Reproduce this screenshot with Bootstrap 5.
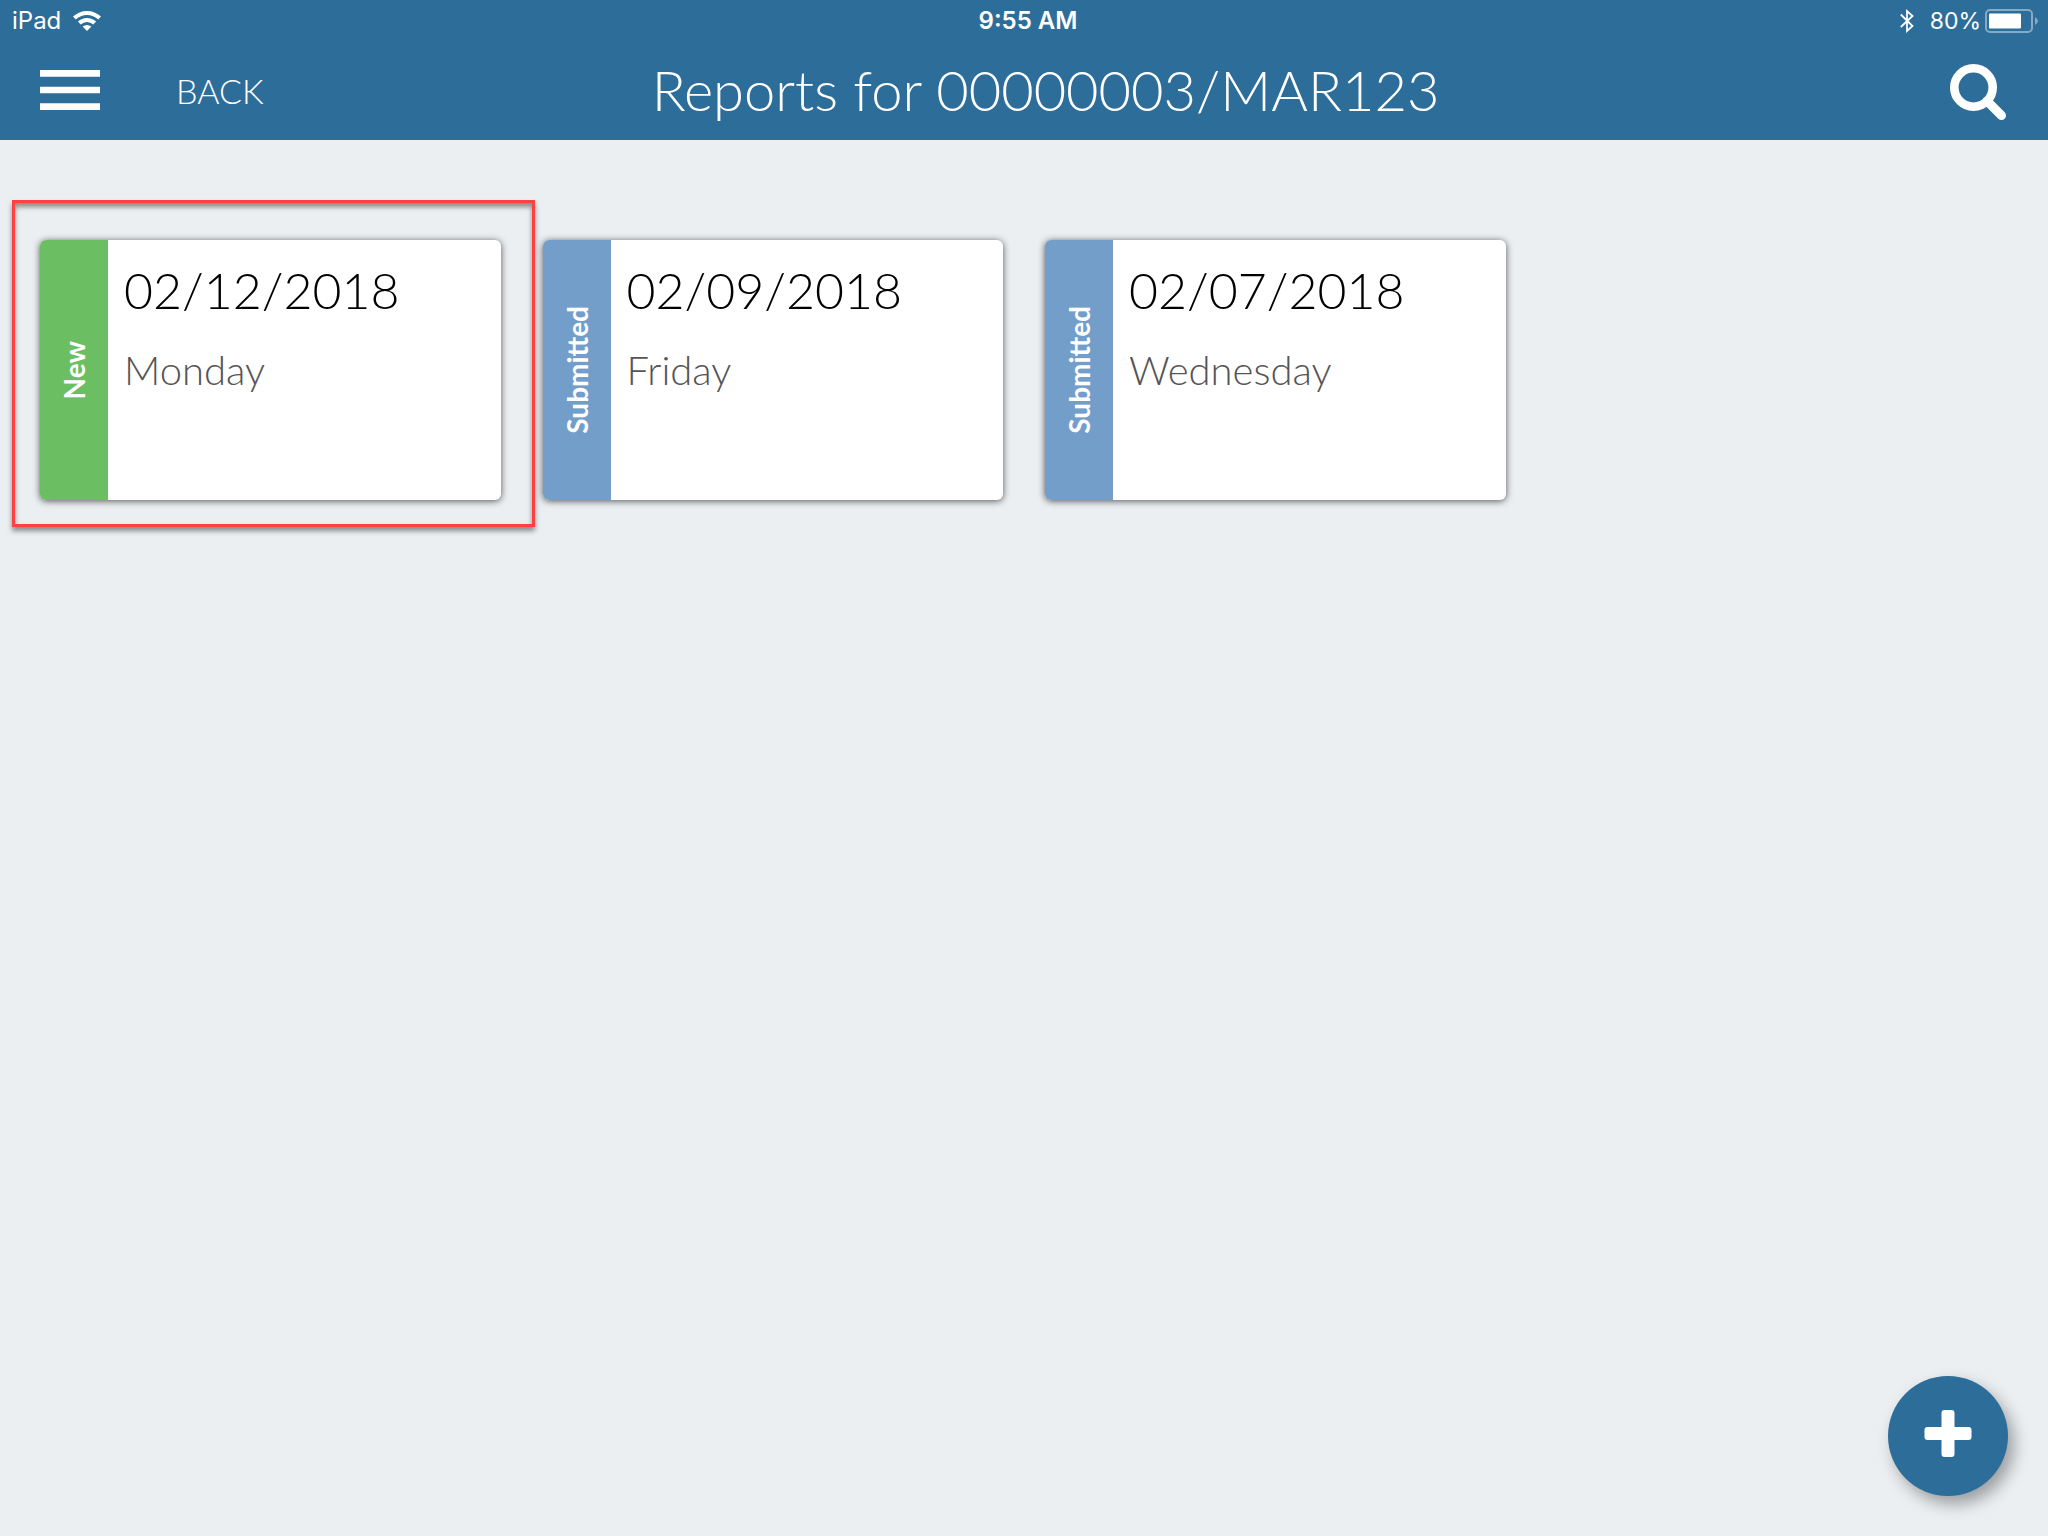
<!DOCTYPE html>
<html lang="en">
<head>
<meta charset="utf-8">
<meta name="viewport" content="width=device-width, initial-scale=1">
<title>Reports for 00000003/MAR123</title>
<link href="https://cdn.jsdelivr.net/npm/bootstrap@5.3.0/dist/css/bootstrap.min.css" rel="stylesheet">
<style>
  body { background: #ebeff2; font-family: Lato, sans-serif; font-weight: 300; }
  .app-header { background: #2d6d99; }
  .status-bar { height: 40px; padding: 2px 10px 0 12px; font-family: Inter, sans-serif; font-size: 24px; font-weight: 400; line-height: 30px; }
  .status-time { font-weight: 600; padding-left: 6px; }
  .status-charge { font-size: 23px; }
  .side { flex: 1 1 0; }
  .status-left { gap: 12px; }
  .toolbar { height: 100px; padding: 0 40px; }
  .toolbar .btn { --bs-btn-color: #fff; --bs-btn-hover-color: #fff; --bs-btn-active-color: #fff; --bs-btn-font-weight: 300; }
  .back-btn { font-size: 34px; line-height: 40px; margin-left: 76px; margin-top: 2px; }
  .page-title { font-size: 56px; font-weight: 300; line-height: 80px; padding-left: 43px; }
  .report-area { padding: 100px 19px 160px; }
  .report-row { --bs-gutter-x: 42px; margin-left: 0; margin-right: 0; }
  .report-card { min-height: 260px; border-radius: 6px; box-shadow: 0 1px 7px rgba(0,0,0,.65); color: #000; }
  .report-state { width: 68px; border-radius: 6px 0 0 6px; font-size: 28px; font-weight: 700; line-height: 34px; }
  .report-state span { writing-mode: vertical-rl; transform: rotate(180deg); }
  .state-new { background: #6bbe61; }
  .state-submitted { background: #749eca; }
  .report-info { padding: 20px 16px; }
  .report-date { font-size: 50px; font-weight: 300; line-height: 60px; }
  .report-day { font-size: 40px; line-height: 48px; margin-top: 26px; color: #555; }
  .callout-box { inset: -40px -13px -27px -7px; border: 3px solid #ff4141; box-shadow: 0 4px 5px rgba(0,0,0,.42), inset 0 4px 5px rgba(0,0,0,.42); pointer-events: none; z-index: 2; }
  .add-btn { right: 40px; bottom: 40px; width: 120px; height: 120px; background: #2d6d99; --bs-btn-hover-bg: #2d6d99; box-shadow: 6px 8px 16px rgba(0,0,0,.34); }
</style>
</head>
<body>
<div class="min-vh-100">
<header class="app-header text-white">
  <div class="status-bar d-flex align-items-center">
    <div class="side status-left d-flex align-items-center">
      <span>iPad</span>
      <svg width="28" height="20" viewBox="0 0 28 20" fill="#fff" aria-hidden="true">
        <path d="M0 5.6Q6 0 14 0T28 5.6L25.2 8.6Q20.400 4 14 4T2.800 8.600Z"/>
        <path d="M4.900 10.600Q9 7 14 7T23.100 10.600L20.300 13.500Q17.500 11 14 11T7.700 13.500Z"/>
        <path d="M9.600 15.500Q14 12.300 18.400 15.500L14 20Z"/>
      </svg>
    </div>
    <div class="status-time">9:55 AM</div>
    <div class="side d-flex align-items-center justify-content-end">
      <svg class="me-3" width="14" height="24" viewBox="0 0 14 24" fill="none" stroke="#fff" stroke-width="1.800" aria-hidden="true"><path d="M0.800 5.500L12.500 17L7 22V2L12.500 7L0.800 18"/></svg>
      <span class="status-charge me-1">80%</span>
      <svg width="53" height="24" viewBox="0 0 53 24" aria-hidden="true">
        <rect x="1" y="1" width="46" height="22" rx="4" fill="none" stroke="#86aac4" stroke-width="2"/>
        <rect x="4" y="4.500" width="32" height="15" rx="1" fill="#fff"/>
        <path d="M50 8Q56 12 50 16Z" fill="#86aac4"/>
      </svg>
    </div>
  </div>
  <nav class="toolbar d-flex align-items-center" aria-label="Main">
    <div class="side d-flex align-items-center">
      <button type="button" class="btn p-0 border-0 d-flex" aria-label="Menu">
        <svg width="60" height="40" viewBox="0 0 60 40" fill="#fff"><path d="M0 0H60V6.700H0ZM0 16.700H60V23.300H0ZM0 33.300H60V40H0Z"/></svg>
      </button>
      <button type="button" class="btn back-btn p-0 border-0">BACK</button>
    </div>
    <h1 class="page-title mb-0">Reports for 00000003/MAR123</h1>
    <div class="side d-flex justify-content-end">
      <button type="button" class="btn p-0 border-0 d-flex" aria-label="Search">
        <svg width="58" height="60" viewBox="0 0 58 60" fill="none" stroke="#fff"><circle cx="23.500" cy="27.500" r="19.200" stroke-width="8.600"/><path d="M37 41L51.500 55.500" stroke-width="9" stroke-linecap="round"/></svg>
      </button>
    </div>
  </nav>
</header>

<main class="report-area">
  <div class="row report-row">
    <div class="col-3 position-relative">
      <a href="#" class="report-card d-flex bg-white text-decoration-none">
        <div class="report-state state-new d-flex align-items-center justify-content-center text-white"><span>New</span></div>
        <div class="report-info">
          <h2 class="report-date mb-0">02/12/2018</h2>
          <p class="report-day mb-0">Monday</p>
        </div>
      </a>
      <div class="callout-box position-absolute"></div>
    </div>
    <div class="col-3">
      <a href="#" class="report-card d-flex bg-white text-decoration-none">
        <div class="report-state state-submitted d-flex align-items-center justify-content-center text-white"><span>Submitted</span></div>
        <div class="report-info">
          <h2 class="report-date mb-0">02/09/2018</h2>
          <p class="report-day mb-0">Friday</p>
        </div>
      </a>
    </div>
    <div class="col-3">
      <a href="#" class="report-card d-flex bg-white text-decoration-none">
        <div class="report-state state-submitted d-flex align-items-center justify-content-center text-white"><span>Submitted</span></div>
        <div class="report-info">
          <h2 class="report-date mb-0">02/07/2018</h2>
          <p class="report-day mb-0">Wednesday</p>
        </div>
      </a>
    </div>
  </div>
</main>
</div>

<button type="button" class="btn add-btn position-fixed rounded-circle border-0 p-0 d-flex align-items-center justify-content-center" aria-label="Add report">
  <svg width="48" height="52" viewBox="0 0 48 52" fill="#fff"><rect x="17.500" y="0" width="13" height="47" rx="3"/><rect x="0.500" y="17" width="47" height="13" rx="3"/></svg>
</button>
<script src="https://cdn.jsdelivr.net/npm/bootstrap@5.3.0/dist/js/bootstrap.bundle.min.js"></script>
</body>
</html>
